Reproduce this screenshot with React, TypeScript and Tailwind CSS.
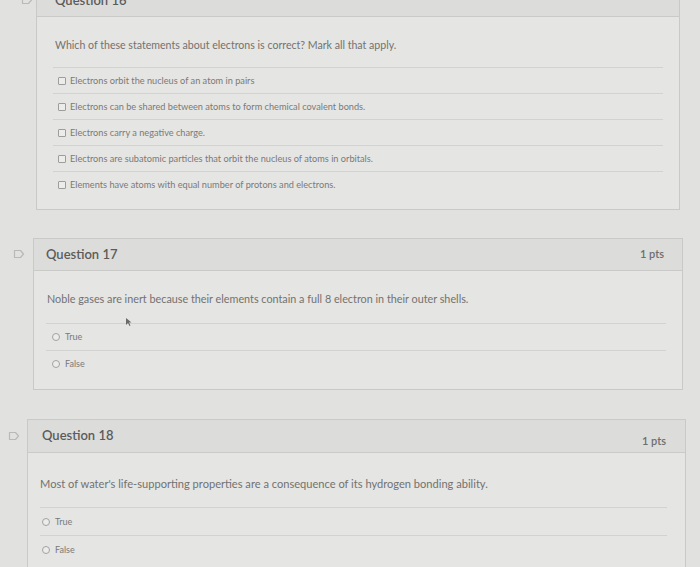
import React from 'react';

const font = { fontFamily: 'Lato, "Open Sans", sans-serif' };

const Flag: React.FC = () => (
  <svg width="12" height="10" viewBox="0 0 12 10" fill="none">
    <path d="M1.5 1.5 H7.5 L10.5 5 L7.5 8.5 H1.5 Z" stroke="#b9b9b7" strokeWidth="1.2" strokeLinejoin="round" />
  </svg>
);

const Checkbox: React.FC = () => (
  <span className="inline-block w-[8px] h-[8px] border border-[#9d9d9b] rounded-[1px] bg-[#ececea] shrink-0" />
);

const Radio: React.FC = () => (
  <span className="inline-block w-[8px] h-[8px] border border-[#a2a2a0] rounded-full bg-[#ececea] shrink-0" />
);

const q16Options = [
  'Electrons orbit the nucleus of an atom in pairs',
  'Electrons can be shared between atoms to form chemical covalent bonds.',
  'Electrons carry a negative charge.',
  'Electrons are subatomic particles that orbit the nucleus of atoms in orbitals.',
  'Elements have atoms with equal number of protons and electrons.',
];

export default function App() {
  return (
    <div className="w-[700px] h-[567px] overflow-hidden bg-[#e1e1df] relative" style={font}>
      {/* Question 16 */}
      <div className="flex items-start -mt-[16px]">
        <div className="w-[36px] h-[32px] flex items-center justify-end pr-[3px]">
          <Flag />
        </div>
        <div className="w-[644px] border border-[#c9c9c7] bg-[#e5e5e3]">
          <div className="h-[32px] flex items-center bg-[#dcdcda] border-b border-[#cacac8] pl-[18px]">
            <span className="text-[13px] font-semibold text-[#5b5b5b]">Question 16</span>
          </div>
          <div className="pt-[21px] pb-[12px] pl-[16px] pr-[16px]">
            <p className="text-[10.6px] leading-[14px] text-[#727270] pl-[2px]">
              Which of these statements about electrons is correct? Mark all that apply.
            </p>
            <div className="mt-[15px]">
              {q16Options.map((o) => (
                <div key={o} className="h-[26px] border-t border-[#d2d2d0] flex items-center gap-[4px] pl-[5px]">
                  <Checkbox />
                  <span className="text-[9.2px] text-[#7a7a78]">{o}</span>
                </div>
              ))}
            </div>
          </div>
        </div>
      </div>

      {/* Question 17 */}
      <div className="flex items-start mt-[28px]">
        <div className="w-[33px] h-[32px] flex items-center justify-end pr-[8px]">
          <Flag />
        </div>
        <div className="w-[650px] border border-[#c9c9c7] bg-[#e5e5e3]">
          <div className="h-[32px] flex items-center justify-between bg-[#dcdcda] border-b border-[#cacac8] pl-[12px] pr-[18px]">
            <span className="text-[13px] font-semibold text-[#5b5b5b]">Question 17</span>
            <span className="text-[11px] font-semibold text-[#6e6e6e]">1 pts</span>
          </div>
          <div className="pt-[21px] pb-[12px] pl-[12px] pr-[16px]">
            <p className="text-[10.8px] leading-[14px] text-[#727270] pl-[1px]">
              Noble gases are inert because their elements contain a full 8 electron in their outer shells.
            </p>
            <div className="mt-[17px]">
              {['True', 'False'].map((o) => (
                <div key={o} className="h-[27px] border-t border-[#d2d2d0] flex items-center gap-[5px] pl-[6px]">
                  <Radio />
                  <span className="text-[9px] text-[#7a7a78]">{o}</span>
                </div>
              ))}
            </div>
          </div>
        </div>
      </div>

      {/* Question 18 */}
      <div className="flex items-start mt-[29px]">
        <div className="w-[27px] h-[33px] flex items-center justify-end pr-[7px]">
          <Flag />
        </div>
        <div className="w-[659px] border border-[#c9c9c7] bg-[#e5e5e3]">
          <div className="h-[33px] flex items-center justify-between bg-[#dcdcda] border-b border-[#cacac8] pl-[14px] pr-[19px]">
            <span className="text-[13px] font-semibold text-[#5b5b5b]">Question 18</span>
            <span className="text-[11px] font-semibold text-[#6e6e6e] mt-[10px]">1 pts</span>
          </div>
          <div className="pt-[23px] pb-[12px] pl-[12px] pr-[18px]">
            <p className="text-[11.1px] leading-[15px] text-[#727270]">
              Most of water's life-supporting properties are a consequence of its hydrogen bonding ability.
            </p>
            <div className="mt-[16px]">
              {['True', 'False'].map((o) => (
                <div key={o} className="h-[28px] border-t border-[#d2d2d0] flex items-center gap-[5px] pl-[2px]">
                  <Radio />
                  <span className="text-[9px] text-[#7a7a78]">{o}</span>
                </div>
              ))}
            </div>
          </div>
        </div>
      </div>

      {/* mouse pointer */}
      <svg className="absolute left-[125px] top-[317px]" width="7" height="10" viewBox="0 0 7 10">
        <path d="M1 1 L1 8 L3 6 L4.5 9 L5.5 8.5 L4 5.5 L6.5 5.5 Z" fill="#6a6a6a" />
      </svg>
    </div>
  );
}
